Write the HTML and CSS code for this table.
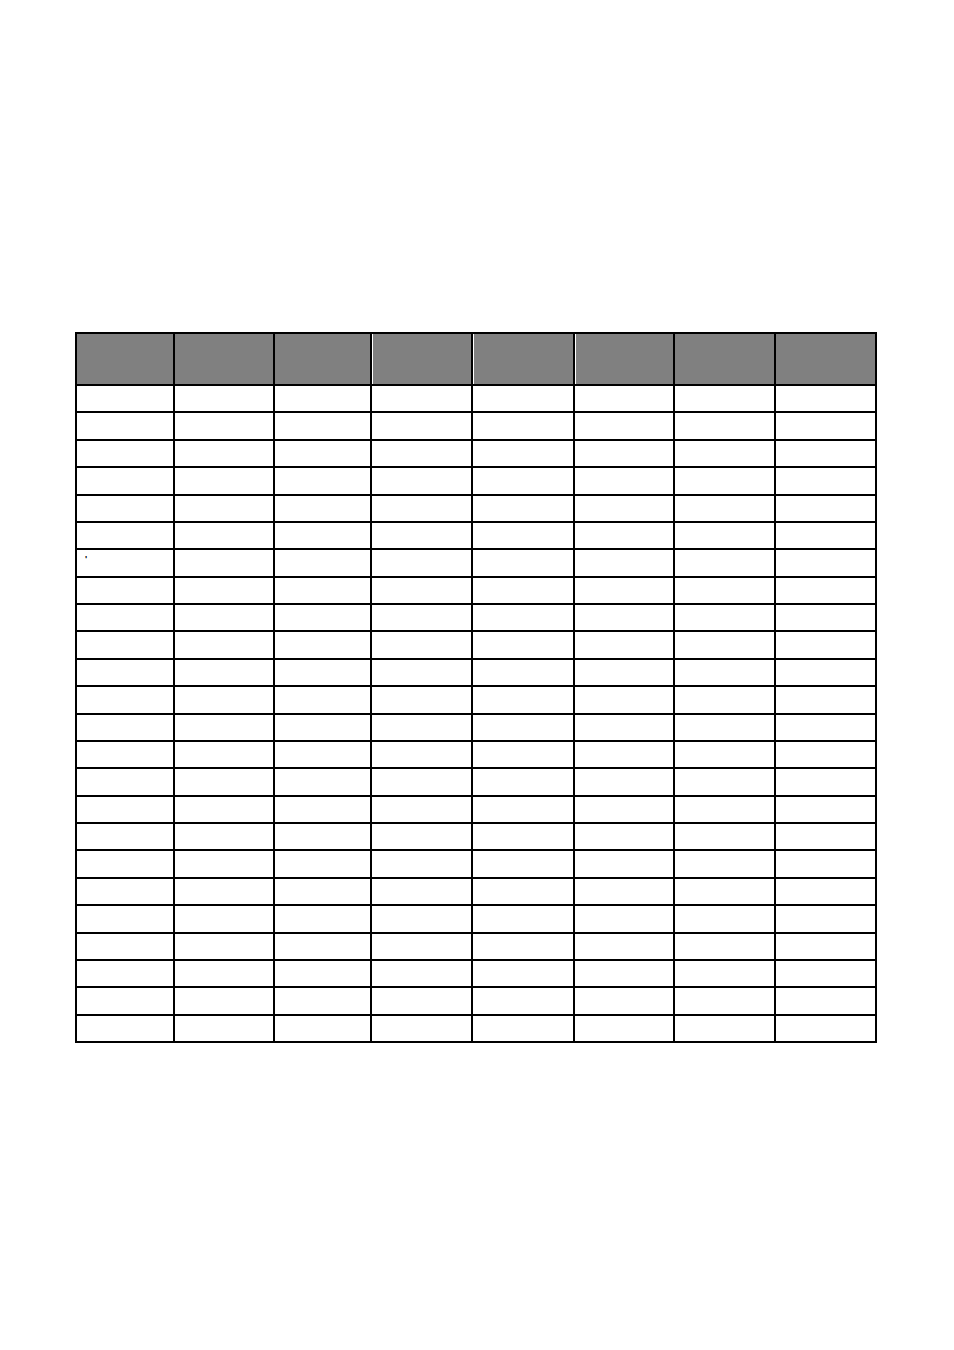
FILE: index.html
```html
<!DOCTYPE html>
<html>
<head>
<meta charset="utf-8">
<link rel="stylesheet" href="styles.css">
</head>
<body>
<div class="page">
  <div class="grid" id="grid">
    <div class="hd"></div><div class="hd"></div><div class="hd"></div><div class="hd sl"></div><div class="hd sl"></div><div class="hd sl"></div><div class="hd"></div><div class="hd"></div>
    <div class="c"></div><div class="c"></div><div class="c"></div><div class="c"></div><div class="c"></div><div class="c"></div><div class="c"></div><div class="c"></div>
    <div class="c"></div><div class="c"></div><div class="c"></div><div class="c"></div><div class="c"></div><div class="c"></div><div class="c"></div><div class="c"></div>
    <div class="c"></div><div class="c"></div><div class="c"></div><div class="c"></div><div class="c"></div><div class="c"></div><div class="c"></div><div class="c"></div>
    <div class="c"></div><div class="c"></div><div class="c"></div><div class="c"></div><div class="c"></div><div class="c"></div><div class="c"></div><div class="c"></div>
    <div class="c"></div><div class="c"></div><div class="c"></div><div class="c"></div><div class="c"></div><div class="c"></div><div class="c"></div><div class="c"></div>
    <div class="c"></div><div class="c"></div><div class="c"></div><div class="c"></div><div class="c"></div><div class="c"></div><div class="c"></div><div class="c"></div>
    <div class="c"><span class="mark">'</span></div><div class="c"></div><div class="c"></div><div class="c"></div><div class="c"></div><div class="c"></div><div class="c"></div><div class="c"></div>
    <div class="c"></div><div class="c"></div><div class="c"></div><div class="c"></div><div class="c"></div><div class="c"></div><div class="c"></div><div class="c"></div>
    <div class="c"></div><div class="c"></div><div class="c"></div><div class="c"></div><div class="c"></div><div class="c"></div><div class="c"></div><div class="c"></div>
    <div class="c"></div><div class="c"></div><div class="c"></div><div class="c"></div><div class="c"></div><div class="c"></div><div class="c"></div><div class="c"></div>
    <div class="c"></div><div class="c"></div><div class="c"></div><div class="c"></div><div class="c"></div><div class="c"></div><div class="c"></div><div class="c"></div>
    <div class="c"></div><div class="c"></div><div class="c"></div><div class="c"></div><div class="c"></div><div class="c"></div><div class="c"></div><div class="c"></div>
    <div class="c"></div><div class="c"></div><div class="c"></div><div class="c"></div><div class="c"></div><div class="c"></div><div class="c"></div><div class="c"></div>
    <div class="c"></div><div class="c"></div><div class="c"></div><div class="c"></div><div class="c"></div><div class="c"></div><div class="c"></div><div class="c"></div>
    <div class="c"></div><div class="c"></div><div class="c"></div><div class="c"></div><div class="c"></div><div class="c"></div><div class="c"></div><div class="c"></div>
    <div class="c"></div><div class="c"></div><div class="c"></div><div class="c"></div><div class="c"></div><div class="c"></div><div class="c"></div><div class="c"></div>
    <div class="c"></div><div class="c"></div><div class="c"></div><div class="c"></div><div class="c"></div><div class="c"></div><div class="c"></div><div class="c"></div>
    <div class="c"></div><div class="c"></div><div class="c"></div><div class="c"></div><div class="c"></div><div class="c"></div><div class="c"></div><div class="c"></div>
    <div class="c"></div><div class="c"></div><div class="c"></div><div class="c"></div><div class="c"></div><div class="c"></div><div class="c"></div><div class="c"></div>
    <div class="c"></div><div class="c"></div><div class="c"></div><div class="c"></div><div class="c"></div><div class="c"></div><div class="c"></div><div class="c"></div>
    <div class="c"></div><div class="c"></div><div class="c"></div><div class="c"></div><div class="c"></div><div class="c"></div><div class="c"></div><div class="c"></div>
    <div class="c"></div><div class="c"></div><div class="c"></div><div class="c"></div><div class="c"></div><div class="c"></div><div class="c"></div><div class="c"></div>
    <div class="c"></div><div class="c"></div><div class="c"></div><div class="c"></div><div class="c"></div><div class="c"></div><div class="c"></div><div class="c"></div>
    <div class="c"></div><div class="c"></div><div class="c"></div><div class="c"></div><div class="c"></div><div class="c"></div><div class="c"></div><div class="c"></div>
  </div>
</div>
</body>
</html>
```
FILE: styles.css
```css
html, body {
  margin: 0;
  padding: 0;
  background: #ffffff;
}
body {
  font-family: "Liberation Sans", Arial, sans-serif;
}
.page {
  width: 954px;
  height: 1350px;
  padding: 332px 0 0 75px;
  box-sizing: border-box;
}
.grid {
  display: grid;
  width: max-content;
  background: #000000;
  padding: 2px;
  gap: 2px;
  grid-template-columns: 95.5px 98.5px 95px 99px 99.5px 98.5px 99px 99px;
  grid-template-rows: 50px repeat(24, 25.375px);
}
.hd {
  background: #808080;
}
.hd.sl {
  box-shadow: inset 1px 0 0 #ffffff;
}
.c {
  background: #ffffff;
}
.mark {
  display: block;
  padding: 5px 0 0 8px;
  font-size: 9px;
  line-height: 8px;
  font-weight: bold;
  color: #000000;
}
```
